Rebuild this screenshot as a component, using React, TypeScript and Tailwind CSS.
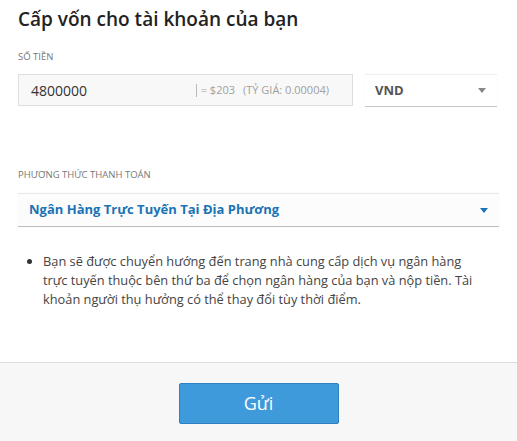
import React from "react";

function Caret({ className }: { className: string }) {
  return (
    <svg width="8" height="5" viewBox="0 0 8 5" className={className}>
      <path d="M0 0h8L4 5z" fill="currentColor" />
    </svg>
  );
}

export default function App() {
  return (
    <div
      className="flex h-[441px] w-[517px] flex-col bg-white text-[#333]"
      style={{ fontFamily: '"Open Sans", "Noto Sans", sans-serif' }}
    >
      <div className="flex-1 px-[18px] pt-[5px]">
        <h1 className="text-[19px] font-semibold leading-[28px] text-[#222]">
          Cấp vốn cho tài khoản của bạn
        </h1>

        <div className="mt-[17px] text-[9.5px] uppercase leading-[14px] text-[#777]">
          Số tiền
        </div>

        <div className="mt-[10px] flex items-stretch gap-[12px]">
          <div className="flex h-[32px] w-[335px] items-center border border-[#dedede] bg-[#f8f8f8] pl-[12px] pr-[23px]">
            <span className="flex-1 text-[14px] text-[#333]">4800000</span>
            <span className="flex items-center text-[11px] text-[#a0a0a0]">
              <span className="mr-[4px] h-[13px] w-px bg-[#bbb]" />
              = $203
              <span className="ml-[8px]">(TỶ GIÁ: 0.00004)</span>
            </span>
          </div>
          <div className="flex h-[33px] w-[132px] items-center justify-between border-t border-b border-t-[#eeeeee] border-b-[#c8c8c8] bg-white pl-[10px] pr-[11px] shadow-[0_0_1px_rgba(0,0,0,0.08)]">
            <span className="text-[13px] font-bold text-[#555]">VND</span>
            <Caret className="text-[#888]" />
          </div>
        </div>

        <div className="mt-[61px] text-[9.5px] uppercase leading-[14px] text-[#777]">
          Phương thức thanh toán
        </div>

        <div className="mt-[11px] flex h-[34px] items-center justify-between border-t border-b border-t-[#e8e8e8] border-b-[#bdbdbd] bg-[#fcfcfc] pl-[11px] pr-[11px] shadow-[0_0_1px_rgba(0,0,0,0.08)]">
          <span className="text-[13px] font-bold text-[#1a73b5]">
            Ngân Hàng Trực Tuyến Tại Địa Phương
          </span>
          <Caret className="text-[#1a73b5]" />
        </div>

        <ul className="mt-[25px] list-disc pl-[25px] text-[12.8px] leading-[19px] text-[#444] marker:text-[#333]">
          <li className="pr-[24px]">
            Bạn sẽ được chuyển hướng đến trang nhà cung cấp dịch vụ ngân hàng
            trực tuyến thuộc bên thứ ba để chọn ngân hàng của bạn và nộp tiền.
            Tài khoản người thụ hưởng có thể thay đổi tùy thời điểm.
          </li>
        </ul>
      </div>

      <div className="flex h-[79px] justify-center border-t border-[#dcdcdc] bg-[#f7f7f7] pt-[20px]">
        <button className="h-[41px] w-[160px] rounded-[2px] border border-[#2f80c0] bg-[#3f9adb] text-[18px] text-white">
          Gửi
        </button>
      </div>
    </div>
  );
}
